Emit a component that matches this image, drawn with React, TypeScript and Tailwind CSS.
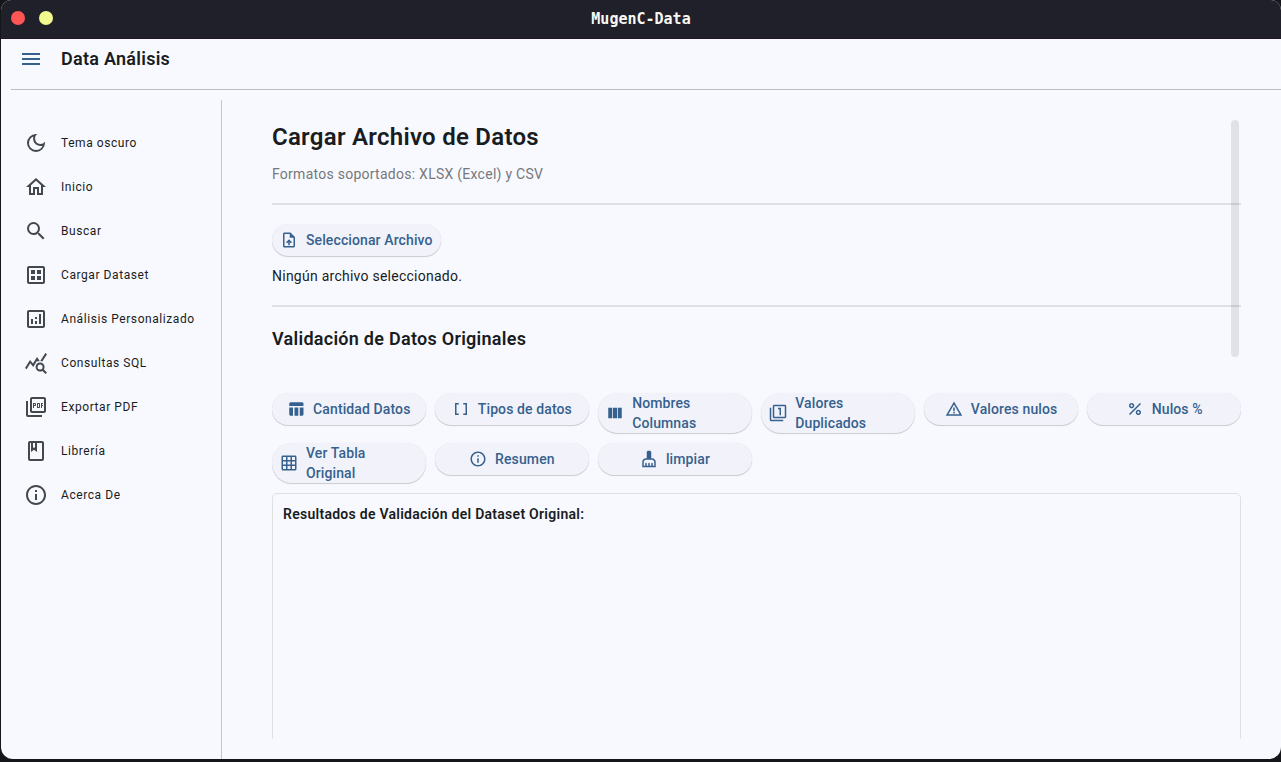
import type { IconType } from "react-icons";
import {
  MdCleaningServices,
  MdDataArray,
  MdGridOn,
  MdMenu,
  MdOutlineAnalytics,
  MdOutlineBook,
  MdOutlineDarkMode,
  MdOutlineDataset,
  MdOutlineFilter1,
  MdOutlineHome,
  MdOutlineInfo,
  MdOutlinePictureAsPdf,
  MdOutlineUploadFile,
  MdPercent,
  MdQueryStats,
  MdSearch,
  MdTableChart,
  MdViewColumn,
  MdWarningAmber,
} from "react-icons/md";

type Item = { icon: IconType; label: string };

const navItems: Item[] = [
  { icon: MdOutlineDarkMode, label: "Tema oscuro" },
  { icon: MdOutlineHome, label: "Inicio" },
  { icon: MdSearch, label: "Buscar" },
  { icon: MdOutlineDataset, label: "Cargar Dataset" },
  { icon: MdOutlineAnalytics, label: "Análisis Personalizado" },
  { icon: MdQueryStats, label: "Consultas SQL" },
  { icon: MdOutlinePictureAsPdf, label: "Exportar PDF" },
  { icon: MdOutlineBook, label: "Librería" },
  { icon: MdOutlineInfo, label: "Acerca De" },
];

const actions: Item[] = [
  { icon: MdTableChart, label: "Cantidad Datos" },
  { icon: MdDataArray, label: "Tipos de datos" },
  { icon: MdViewColumn, label: "Nombres Columnas" },
  { icon: MdOutlineFilter1, label: "Valores Duplicados" },
  { icon: MdWarningAmber, label: "Valores nulos" },
  { icon: MdPercent, label: "Nulos %" },
  { icon: MdGridOn, label: "Ver Tabla Original" },
  { icon: MdOutlineInfo, label: "Resumen" },
  { icon: MdCleaningServices, label: "limpiar" },
];

function PillButton({ icon: Icon, label }: Item) {
  return (
    <button className="flex min-h-8 items-center justify-center gap-2 rounded-full bg-[#f2f3fa] px-2 text-left text-sm leading-5 font-medium tracking-[0.11px] text-[#36618e] shadow-[0_1px_1px_rgba(0,0,0,0.18),0_0_1px_rgba(0,0,0,0.1)]">
      <Icon className="size-[18px] shrink-0" />
      <span>{label}</span>
    </button>
  );
}

function TitleBar() {
  return (
    <header className="flex h-[39px] shrink-0 items-center border-b border-[#22162a] bg-[#20202a] px-2.5 pb-0.5">
      <div className="flex flex-1 gap-3.5">
        <span className="size-3.5 rounded-full bg-[#ff5555]" />
        <span className="size-3.5 rounded-full bg-[#f1fa8c]" />
      </div>
      <h1 className="pt-0.5 font-['DejaVu_Sans_Mono',monospace] text-[15px] leading-5 font-bold text-[#f8f8f2]">MugenC-Data</h1>
      <div className="flex-1" />
    </header>
  );
}

function Sidebar() {
  return (
    <nav className="mt-2.5 w-[221px] shrink-0 border-r border-[#c3c6cf] pt-[21px]">
      {navItems.map(({ icon: Icon, label }) => (
        <a key={label} className="flex h-11 items-center gap-[13px] pl-[23px] text-xs tracking-[0.57px]">
          <Icon className="size-6 shrink-0 text-[#43474e]" />
          {label}
        </a>
      ))}
    </nav>
  );
}

export default function App() {
  return (
    <div className="h-[762px] w-[1281px] overflow-hidden bg-[#15161a] pb-[3px] pl-px font-['Roboto',sans-serif] text-[#191c20]">
      <div className="flex h-full flex-col overflow-hidden rounded-t-[10px] rounded-b-xl bg-[#f8f9ff]">
        <TitleBar />
        <div className="ml-2.5 flex h-[51px] shrink-0 items-start gap-[18px] border-b border-[#bcbdc3] pt-2 pl-2">
          <MdMenu className="size-6 text-[#36618e]" />
          <h2 className="text-lg leading-6 font-semibold tracking-[0.27px]">Data Análisis</h2>
        </div>
        <div className="flex min-h-0 flex-1">
          <Sidebar />
          <main className="relative mt-[30px] mr-10 mb-5 ml-[50px] min-w-0 flex-1 overflow-hidden">
            <div>
              <h2 className="pt-px text-2xl leading-8 font-semibold tracking-[0.27px]">Cargar Archivo de Datos</h2>
              <p className="mt-[11px] text-sm leading-5 tracking-[0.26px] text-[#76777b]">Formatos soportados: XLSX (Excel) y CSV</p>
              <hr className="mt-[19px] border-0 border-t-2 border-[#dfe0e5]" />
              <div className="mt-[19px] flex">
                <PillButton icon={MdOutlineUploadFile} label="Seleccionar Archivo" />
              </div>
              <p className="mt-2.5 text-sm leading-5 tracking-[0.25px]">Ningún archivo seleccionado.</p>
              <hr className="mt-[19px] border-0 border-t-2 border-[#dfe0e5]" />
              <h3 className="mt-5 text-lg leading-6 font-semibold tracking-[0.27px]">Validación de Datos Originales</h3>
              <div className="mt-[42px] grid grid-cols-6 items-start gap-x-[9.5px] gap-y-2.5">
                {actions.map((action) => (
                  <PillButton key={action.label} {...action} />
                ))}
              </div>
              <section className="mt-2.5 h-[400px] rounded-[5px] border border-[#dfe0e5] p-2.5">
                <h4 className="text-sm leading-5 font-semibold tracking-[0.27px]">Resultados de Validación del Dataset Original:</h4>
              </section>
            </div>
            <div className="absolute top-0 right-0.5 h-[237px] w-2 rounded-full bg-black/9" />
          </main>
        </div>
      </div>
    </div>
  );
}
